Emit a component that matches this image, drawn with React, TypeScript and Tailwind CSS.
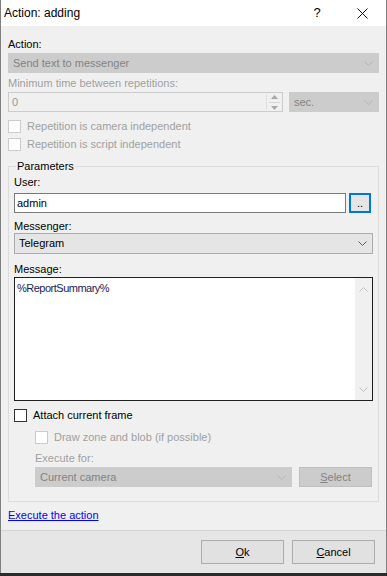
import React from 'react';

const Chevron: React.FC<{ up?: boolean; color?: string }> = ({ up, color = '#a6a6a6' }) => (
    <svg width="9" height="5" viewBox="0 0 9 5" className="block">
        <path d={up ? 'M0.5 4.5 L4.5 0.5 L8.5 4.5' : 'M0.5 0.5 L4.5 4.5 L8.5 0.5'} fill="none" stroke={color} strokeWidth="1" />
    </svg>
);

const Combo: React.FC<{ value: string; disabled?: boolean; className?: string }> = ({ value, disabled, className = '' }) => (
    <div
        className={`flex items-center justify-between pl-[4px] pr-[5px] border ${
            disabled ? 'bg-[#cccccc] border-[#cccccc] text-[#838383]' : 'bg-[#e5e5e5] border-[#acacac] text-black'
        } ${className}`}
    >
        <span className="leading-[13px]">{value}</span>
        <Chevron color={disabled ? '#b4b4b4' : '#606060'} />
    </div>
);

const Check: React.FC<{ label: string; disabled?: boolean; className?: string }> = ({ label, disabled, className = '' }) => (
    <div className={`flex items-center h-[13px] ${className}`}>
        <div className={`w-[13px] h-[13px] bg-white border ${disabled ? 'border-[#cccccc]' : 'border-[#333333]'}`} />
        <span className={`ml-[6px] leading-[13px] ${disabled ? 'text-[#a0a0a0]' : 'text-black'}`}>{label}</span>
    </div>
);

const Label: React.FC<{ text: string; disabled?: boolean; className?: string }> = ({ text, disabled, className = '' }) => (
    <div className={`leading-[13px] h-[13px] ${disabled ? 'text-[#a0a0a0]' : 'text-black'} ${className}`}>{text}</div>
);

export default function App() {
    return (
        <div
            className="w-[387px] h-[576px] flex flex-col bg-[#2b2b2b] text-[11px] text-black"
            style={{ fontFamily: '"Liberation Sans", Arial, sans-serif' }}
        >
            <div className="flex flex-col flex-1 border-x border-[#7f7f7f]">
                {/* title bar */}
                <div className="h-[26px] bg-white flex items-center pl-[3px] text-[12px]">
                    <span className="flex-1 leading-[14px]">Action: adding</span>
                    <span className="w-[12px] text-center leading-[14px] mr-[34px] text-[13px]">?</span>
                    <svg width="11" height="11" viewBox="0 0 11 11" className="mr-[18px]">
                        <path d="M0.5 0.5 L10.5 10.5 M10.5 0.5 L0.5 10.5" stroke="#111" strokeWidth="1" />
                    </svg>
                </div>

                {/* body */}
                <div className="flex-1 bg-[#f0f0f0] px-[7px] pt-[12px]">
                    <Label text="Action:" />
                    <Combo value="Send text to messenger" disabled className="mt-[2px] h-[20px]" />
                    <Label text="Minimum time between repetitions:" disabled className="mt-[4px]" />
                    <div className="flex mt-[2px] h-[20px]">
                        <div className="w-[275px] flex border border-[#cccccc] bg-[#f0f0f0]">
                            <span className="flex-1 pl-[3px] leading-[18px] text-[#969696]">0</span>
                            <div className="w-[15px] flex flex-col items-center justify-center gap-[3px] border-l border-[#e0e0e0] my-[1px] mr-[1px]">
                                <svg width="7" height="4" viewBox="0 0 7 4"><path d="M0 4 L3.5 0 L7 4 Z" fill="#a8a8a8" /></svg>
                                <div className="w-[11px] h-px bg-[#d6d6d6]" />
                                <svg width="7" height="4" viewBox="0 0 7 4"><path d="M0 0 L3.5 4 L7 0 Z" fill="#a8a8a8" /></svg>
                            </div>
                        </div>
                        <Combo value="sec." disabled className="ml-[6px] flex-1" />
                    </div>
                    <Check label="Repetition is camera independent" disabled className="mt-[8px]" />
                    <Check label="Repetition is script independent" disabled className="mt-[5px]" />

                    <fieldset className="mt-[9px] border border-[#dcdcdc] px-[5px] pb-[14px]">
                        <legend className="ml-[2px] px-[1px] leading-[13px]">Parameters</legend>
                        <Label text="User:" className="mt-[3px]" />
                        <div className="flex mt-[4px] h-[20px]">
                            <div className="flex-1 border border-[#7a7a7a] bg-white pl-[2px] leading-[18px]">admin</div>
                            <div className="ml-[3px] mr-[2px] w-[22px] border-2 border-[#0078d7] bg-[#e5e5e5] flex items-end justify-center pb-[2px] leading-[11px]">
                                ..
                            </div>
                        </div>
                        <Label text="Messenger:" className="mt-[7px]" />
                        <Combo value="Telegram" className="h-[21px]" />
                        <Label text="Message:" className="mt-[9px]" />
                        <div className="mt-[1px] h-[124px] flex border border-[#1e1e1e] bg-white">
                            <div className="flex-1 pl-[2px] pt-[4px] leading-[13px] tracking-[-0.5px] text-[#1c1c50]">%ReportSummary%</div>
                            <div className="w-[17px] bg-[#f0f0f0] flex flex-col items-center justify-between pt-[9px] pb-[8px]">
                                <Chevron up color="#c0c0c0" />
                                <Chevron color="#c0c0c0" />
                            </div>
                        </div>
                        <Check label="Attach current frame" className="mt-[8px]" />
                        <div className="pl-[21px]">
                            <Check label="Draw zone and blob (if possible)" disabled className="mt-[9px]" />
                            <Label text="Execute for:" disabled className="mt-[8px]" />
                            <div className="flex mt-[2px] h-[20px]">
                                <Combo value="Current camera" disabled className="w-[257px]" />
                                <div className="ml-[7px] w-[73px] border border-[#bfbfbf] bg-[#cccccc] text-[#838383] flex items-center justify-center leading-[13px]">
                                    <span><span className="underline">S</span>elect</span>
                                </div>
                            </div>
                        </div>
                    </fieldset>

                    <div className="mt-[7px] leading-[13px] text-[#0000ff] underline">Execute the action</div>
                </div>

                {/* footer */}
                <div className="h-[43px] bg-[#e6e6e6] border-t border-[#d4d4d4] flex justify-end items-start pt-[9px] pr-[11px] gap-[8px]">
                    <div className="w-[83px] h-[24px] border border-[#adadad] bg-[#e1e1e1] flex items-center justify-center leading-[13px]">
                        <span><span className="underline">O</span>k</span>
                    </div>
                    <div className="w-[83px] h-[24px] border border-[#adadad] bg-[#e1e1e1] flex items-center justify-center leading-[13px]">
                        <span><span className="underline">C</span>ancel</span>
                    </div>
                </div>
            </div>
            <div className="h-[3px]" />
        </div>
    );
}
